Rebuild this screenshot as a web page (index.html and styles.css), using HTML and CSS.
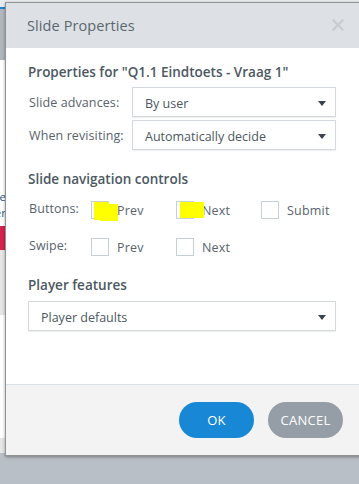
FILE: index.html
```html
<!DOCTYPE html>
<html>
<head>
<meta charset="utf-8">
<link rel="stylesheet" href="styles.css">
</head>
<body>
<div class="backdrop">
  <div class="bg-top"></div>
  <div class="bg-blue"></div>
  <div class="bg-gray"></div>
  <div class="bg-white"></div>
  <div class="bg-text"><span class="bg-line">ve</span><span class="bg-line">er</span></div>
  <div class="bg-red"></div>
  <div class="bg-light"></div>
  <div class="bg-white2"></div>
  <div class="bg-light2"></div>
</div>

<div class="dialog">
  <div class="dialog-header">
    <span class="dialog-title">Slide Properties</span>
    <svg class="close" width="12" height="12" viewBox="0 0 12 12"><path d="M1.5 1.5 L10.5 10.5 M10.5 1.5 L1.5 10.5" stroke="#c9cdd1" stroke-width="2.4" stroke-linecap="square"/></svg>
  </div>
  <div class="dialog-body">
    <div class="heading">Properties for "Q1.1 Eindtoets - Vraag 1"</div>
    <div class="form-row first">
      <span class="label">Slide advances:</span>
      <div class="select"><span>By user</span><span class="caret"></span></div>
    </div>
    <div class="form-row">
      <span class="label">When revisiting:</span>
      <div class="select"><span>Automatically decide</span><span class="caret"></span></div>
    </div>

    <div class="heading section">Slide navigation controls</div>
    <div class="check-row">
      <span class="label short">Buttons:</span>
      <label class="opt"><span class="box"><span class="hl hl-prev"></span><span class="hl hl-prev2"></span></span><span class="opt-text">Prev</span></label>
      <label class="opt"><span class="box"><span class="hl hl-next"></span></span><span class="opt-text">Next</span></label>
      <label class="opt"><span class="box"></span><span class="opt-text">Submit</span></label>
    </div>
    <div class="check-row swipe">
      <span class="label short">Swipe:</span>
      <label class="opt"><span class="box"></span><span class="opt-text">Prev</span></label>
      <label class="opt"><span class="box"></span><span class="opt-text">Next</span></label>
    </div>

    <div class="heading section2">Player features</div>
    <div class="select wide"><span>Player defaults</span><span class="caret"></span></div>
  </div>
  <div class="dialog-footer">
    <button class="btn ok">OK</button>
    <button class="btn cancel">CANCEL</button>
  </div>
</div>
</body>
</html>
```

FILE: styles.css
```css
html, body {
  margin: 0;
  padding: 0;
  width: 359px;
  height: 484px;
  overflow: hidden;
  background: #b9bfc6;
  font-family: "Open Sans", "Noto Sans", sans-serif;
}

.backdrop {
  width: 359px;
  display: flex;
  flex-direction: column;
}
.bg-top { height: 7px; background: #e9ecef; }
.bg-blue { height: 2px; background: #1a87d6; }
.bg-gray { height: 51px; background: #b1b7bd; }
.bg-white { height: 126px; background: #ffffff; }
.bg-text {
  height: 40px;
  width: 6px;
  overflow: hidden;
  background: #ffffff;
  display: flex;
  flex-direction: column;
  align-items: flex-end;
  padding-top: 3px;
  box-sizing: border-box;
}
.bg-line {
  font-size: 11.5px;
  line-height: 16px;
  color: #2b5a86;
  white-space: nowrap;
}
.bg-red { height: 24px; background: #d6224c; width: 10px; }
.bg-light { height: 65px; background: #e6e6e6; }
.bg-white2 { height: 123px; background: #ffffff; }
.bg-light2 { height: 15px; background: #e6e6e6; }

.dialog {
  position: absolute;
  left: 5px;
  top: 2px;
  width: 390px;
  border: 1px solid #8f9396;
  box-shadow: 0 1px 3px rgba(0,0,0,0.35);
  background: #ffffff;
}

.dialog-header {
  height: 45px;
  background: #dde1e5;
  display: flex;
  align-items: center;
  padding-left: 21px;
  position: relative;
}
.dialog-title {
  font-size: 14.5px;
  color: #5b666f;
  font-weight: 400;
  letter-spacing: 0.1px;
}
.close {
  position: absolute;
  left: 326px;
  top: 16px;
}

.dialog-body {
  padding: 15px 22px 0 22px;
  height: 321px;
  box-sizing: content-box;
  width: 308px;
}

.heading {
  font-size: 13.5px;
  font-weight: 600;
  color: #4c5862;
  line-height: 18px;
}
.heading.section { margin-top: 20px; }
.heading.section2 { margin-top: 19px; }

.form-row {
  display: flex;
  align-items: center;
  margin-top: 3px;
}
.form-row.first { margin-top: 6px; }

.label {
  width: 104px;
  flex: none;
  font-size: 12.5px;
  color: #58636d;
  padding-left: 1px;
  box-sizing: border-box;
  letter-spacing: 0.1px;
}
.label.short { width: 63px; }

.select {
  flex: 1;
  height: 30px;
  border: 1px solid #d3d9de;
  box-shadow: 0 1px 1px rgba(0,0,0,0.06);
  box-sizing: border-box;
  display: flex;
  align-items: center;
  justify-content: space-between;
  padding: 2px 9px 0 12px;
  font-size: 12.5px;
  color: #4c5761;
}
.select.wide { margin-top: 7px; padding-left: 12px; }

.caret {
  width: 0;
  height: 0;
  border-left: 4px solid transparent;
  border-right: 4px solid transparent;
  border-top: 5px solid #3a434c;
}

.check-row {
  display: flex;
  align-items: flex-start;
  margin-top: 12px;
  height: 20px;
}
.check-row.swipe { margin-top: 17px; }
.check-row .label { padding-top: 1px; line-height: 16px; }

.opt {
  width: 85px;
  flex: none;
  display: flex;
  align-items: center;
  gap: 8px;
  font-size: 12.5px;
  color: #58636d;
  height: 18px;
  margin-top: 1px;
}
.opt-text { line-height: 18px; padding-top: 2px; letter-spacing: 0.2px; }

.box {
  width: 18px;
  height: 18px;
  border: 1px solid #c7cfd6;
  box-sizing: border-box;
  background: #ffffff;
  position: relative;
  flex: none;
}

.hl {
  position: absolute;
  background: #ffff00;
}
.hl-prev { left: 2px; top: 0px; width: 15px; height: 18px; }
.hl-prev2 { left: 8px; top: 2px; width: 18px; height: 17px; }
.hl-next { left: 3px; top: 0px; width: 24px; height: 16px; }

.dialog-footer {
  border-top: 1px solid #d9e1e9;
  background: #f3f3f3;
  height: 70px;
  display: flex;
  align-items: center;
  padding-left: 173px;
  gap: 14px;
}

.btn {
  width: 75px;
  height: 36px;
  border: none;
  border-radius: 18px;
  color: #ffffff;
  font-family: "Open Sans", "Noto Sans", sans-serif;
  font-size: 13px;
  padding: 0;
  letter-spacing: 0.3px;
}
.btn.ok { background: #1887d6; }
.btn.cancel { background: #959ea6; }
```
